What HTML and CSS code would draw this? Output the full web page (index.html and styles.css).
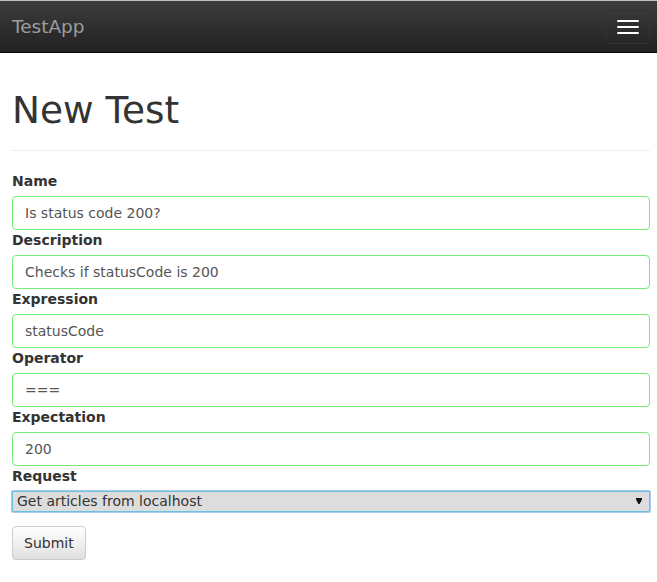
FILE: index.html
```html
<!DOCTYPE html>
<html>
<head>
<meta charset="utf-8">
<title>TestApp</title>
<link rel="stylesheet" href="styles.css">
</head>
<body>
<nav class="navbar">
  <div class="navbar-inner">
    <span class="brand">TestApp</span>
    <button class="toggle" type="button" aria-label="Toggle navigation">
      <span class="bar"></span>
      <span class="bar"></span>
      <span class="bar"></span>
    </button>
  </div>
</nav>
<main class="container">
  <div class="page-header">
    <h1>New Test</h1>
  </div>
  <form class="form">
    <div class="group">
      <label class="label">Name</label>
      <input class="control" type="text" value="Is status code 200?">
    </div>
    <div class="group">
      <label class="label">Description</label>
      <input class="control" type="text" value="Checks if statusCode is 200">
    </div>
    <div class="group">
      <label class="label">Expression</label>
      <input class="control" type="text" value="statusCode">
    </div>
    <div class="group">
      <label class="label">Operator</label>
      <input class="control" type="text" value="===">
    </div>
    <div class="group">
      <label class="label">Expectation</label>
      <input class="control" type="text" value="200">
    </div>
    <div class="group">
      <label class="label">Request</label>
      <select class="select">
        <option>Get articles from localhost</option>
      </select>
    </div>
    <button class="btn" type="button">Submit</button>
  </form>
</main>
</body>
</html>
```

FILE: styles.css
```css
html, body {
  margin: 0;
  padding: 0;
  background: #fff;
}
body {
  font-family: "DejaVu Sans", Verdana, sans-serif;
  font-size: 14px;
  line-height: 20px;
  color: #333;
}
.navbar {
  border-top: 1px solid #bdbdbd;
  border-bottom: 1px solid #080808;
  background: linear-gradient(to bottom, #3c3c3c 0%, #222 100%);
}
.navbar-inner {
  height: 51px;
  display: flex;
  align-items: center;
  justify-content: space-between;
  padding: 0 7px 0 12px;
}
.brand {
  font-size: 18.5px;
  line-height: 20px;
  color: #9d9d9d;
}
.toggle {
  width: 44px;
  height: 34px;
  padding: 9px 10px;
  border: 1px solid #333;
  border-radius: 4px;
  background: transparent;
  display: flex;
  flex-direction: column;
  gap: 4px;
  box-sizing: border-box;
  margin-top: 1px;
}
.bar {
  display: block;
  width: 22px;
  height: 2px;
  background: #fff;
  border-radius: 1px;
}
.container {
  padding: 0 7px 0 12px;
}
.page-header {
  margin: 38px 0 20px;
  padding-bottom: 9px;
  border-bottom: 1px solid #eee;
}
h1 {
  margin: 0 0 10px;
  font-size: 37.4px;
  font-weight: 500;
  line-height: 39.6px;
  color: #333;
}
.form {
  display: flex;
  flex-direction: column;
  align-items: flex-start;
}
.group {
  display: flex;
  flex-direction: column;
  width: 100%;
}
.label {
  font-weight: bold;
  margin-bottom: 5px;
  line-height: 20px;
}
.control {
  box-sizing: border-box;
  width: 100%;
  height: 34px;
  padding: 6px 12px;
  font-family: inherit;
  font-size: 14px;
  color: #555;
  background: #fff;
  border: 1px solid #78ec78;
  border-radius: 4px;
  outline: none;
  margin: 0;
}
.select {
  box-sizing: border-box;
  width: 100%;
  height: 21px;
  margin: 0;
  padding: 0 20px 0 4px;
  font-family: inherit;
  font-size: 14px;
  line-height: 19px;
  color: #333;
  -webkit-appearance: none;
  appearance: none;
  border: 1px solid #6cc0e0;
  box-shadow: 0 0 0 1px #a8cdf0;
  border-radius: 1px;
  background-color: #ddd;
  background-image: url("data:image/svg+xml,%3Csvg xmlns='http://www.w3.org/2000/svg' width='6' height='6'%3E%3Cpath d='M0 0H6V1.5L3.6 6H2.4L0 1.5Z' fill='%23111'/%3E%3C/svg%3E");
  background-repeat: no-repeat;
  background-position: right 7px center;
  outline: none;
}
.btn {
  margin-top: 14px;
  height: 34px;
  padding: 6px 11px;
  font-family: inherit;
  font-size: 14px;
  line-height: 20px;
  color: #333;
  border: 1px solid #ccc;
  border-radius: 4px;
  background: linear-gradient(to bottom, #fff 0%, #e0e0e0 100%);
  box-shadow: inset 0 1px 0 rgba(255,255,255,.15), 0 1px 1px rgba(0,0,0,.075);
}
```
